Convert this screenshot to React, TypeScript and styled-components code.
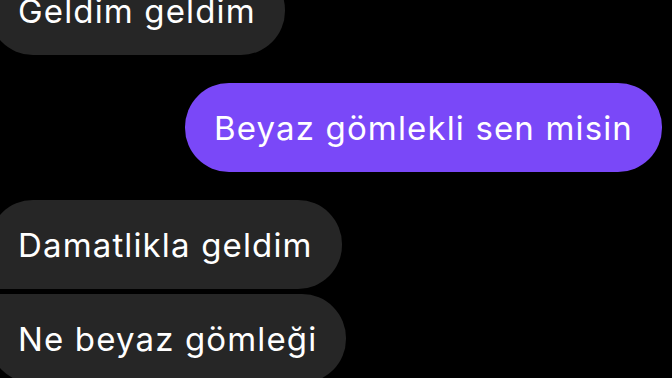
import React from 'react';
import styled, {createGlobalStyle} from 'styled-components';

const GlobalStyle = createGlobalStyle`
  html, body {
    margin: 0;
    padding: 0;
    background: #000;
    overflow: hidden;
  }
  body {
    font-family: Inter, "Noto Sans", sans-serif;
  }
`;

type Msg = {
    text: string;
    mine: boolean;
};

const MESSAGES: Msg[] = [
    {text: 'Geldim geldim', mine: false},
    {text: 'Beyaz gömlekli sen misin', mine: true},
    {text: 'Damatlikla geldim', mine: false},
    {text: 'Ne beyaz gömleği', mine: false},
];

const App = () => {
    return (
        <>
            <GlobalStyle/>
            <ChatScreen>
                <Thread>
                    {MESSAGES.map((msg, index) => {
                        const prev = MESSAGES[index - 1];
                        const next = MESSAGES[index + 1];
                        const joinedTop = !!prev && prev.mine === msg.mine;
                        const joinedBottom = !!next && next.mine === msg.mine;
                        return (
                            <Row key={index} $mine={msg.mine} $joined={joinedTop}>
                                <Bubble
                                    $mine={msg.mine}
                                    $joinedTop={joinedTop}
                                    $joinedBottom={joinedBottom}
                                >
                                    {msg.text}
                                </Bubble>
                            </Row>
                        );
                    })}
                </Thread>
            </ChatScreen>
        </>
    );
};

export default App;

const ChatScreen = styled.div`
  width: 672px;
  height: 378px;
  overflow: hidden;
  background-color: #000;
`;

const Thread = styled.div`
  display: flex;
  flex-direction: column;
  margin-top: -34px;
  padding: 0 10px 0 0;
`;

const Row = styled.div<{$mine: boolean; $joined: boolean}>`
  display: flex;
  justify-content: ${p => (p.$mine ? 'flex-end' : 'flex-start')};
  margin-top: ${p => (p.$joined ? '5px' : '28px')};
  &:first-child {
    margin-top: 0;
  }
`;

const Bubble = styled.div<{$mine: boolean; $joinedTop: boolean; $joinedBottom: boolean}>`
  height: 89px;
  display: flex;
  align-items: center;
  padding: 0 29px 0 29px;
  margin-left: ${p => (p.$mine ? '0' : '-11px')};
  box-sizing: border-box;
  white-space: nowrap;
  font-size: 33px;
  font-weight: 400;
  letter-spacing: 1.15px;
  color: #fff;
  background-color: ${p => (p.$mine ? '#7a48f8' : '#262626')};
  border-radius: 44px;
  ${p => !p.$mine && p.$joinedTop && 'border-top-left-radius: 6px;'}
  ${p => !p.$mine && p.$joinedBottom && 'border-bottom-left-radius: 6px;'}
`;
